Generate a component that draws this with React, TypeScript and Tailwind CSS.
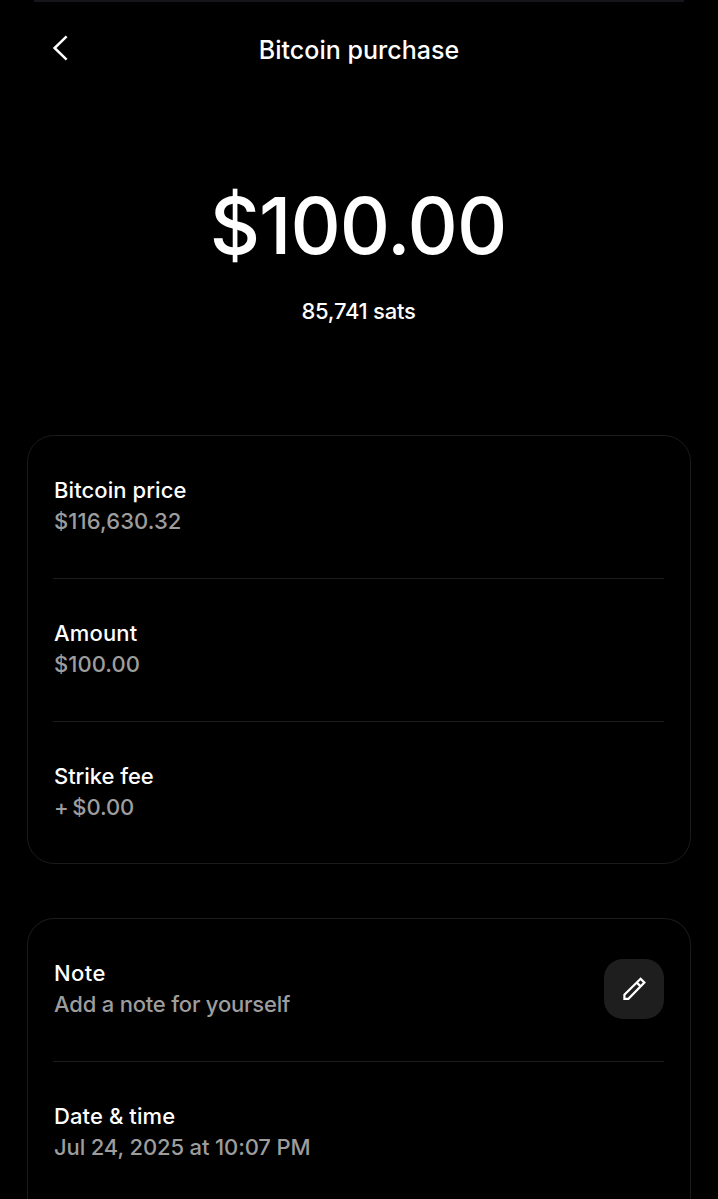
import { ReactNode } from "react";
import clsx from "clsx";

type RowProps = {
  label: string;
  value: string;
  labelClass?: string;
  valueClass?: string;
  last?: boolean;
  children?: ReactNode;
};

function Row({ label, value, labelClass, valueClass, last, children }: RowProps) {
  return (
    <div
      className={clsx(
        "flex items-start justify-between h-[143px] pt-[39px]",
        !last && "border-b border-[#1b1b1b]"
      )}
    >
      <div className="pl-px text-[22px] leading-[31px] font-medium whitespace-nowrap">
        <div className={clsx("text-white", labelClass)}>{label}</div>
        <div className={clsx("text-[#9d9d9d]", valueClass)}>{value}</div>
      </div>
      {children}
    </div>
  );
}

function EditButton() {
  return (
    <button
      aria-label="Edit note"
      className="flex items-center justify-center size-[60px] mt-px rounded-[19px] bg-[#1e1e1e]"
    >
      <svg width="24" height="24" viewBox="0 0 24 24" fill="none" stroke="white" strokeWidth="2.2">
        <path d="M2.4 21.8V17.8L18.6 1.8L22.4 5.6L6.4 21.8Z" />
        <path d="M14.8 5.6L18.6 9.4" />
      </svg>
    </button>
  );
}

export default function App() {
  return (
    <div className="w-[718px] h-[1199px] overflow-hidden bg-black text-white font-['Inter',sans-serif]">
      <div className="h-[2px] mx-[34px] bg-[#15151a]" />

      <header className="flex items-center h-[95px] px-[52px]">
        <button aria-label="Back" className="flex w-[30px] -mt-[3px]">
          <svg width="16" height="26" viewBox="0 0 16 26" fill="none" stroke="white" strokeWidth="2.5">
            <path d="M14.6 1.4L2.6 13L14.6 24.6" />
          </svg>
        </button>
        <h1 className="flex-1 text-center text-[25px] leading-[32px] font-medium tracking-[0.03px]">
          Bitcoin purchase
        </h1>
        <div className="w-[30px]" />
      </header>

      <section className="flex flex-col items-center pt-[84px] h-[338px]">
        <div className="text-[78px] leading-[90px] font-medium tracking-[-1px] mr-[2px]">$100.00</div>
        <div className="mt-[25px] mr-px text-[22px] leading-[31px] font-medium tracking-[-0.25px]">
          85,741 sats
        </div>
      </section>

      <main className="flex flex-col gap-[54px] px-[27px]">
        <section className="rounded-[27px] border border-[#1b1b1b] h-[429px] pl-[25px] pr-[26px]">
          <Row
            label="Bitcoin price"
            value="$116,630.32"
            labelClass="tracking-[0.08px]"
            valueClass="tracking-[0.1px]"
          />
          <Row
            label="Amount"
            value="$100.00"
            labelClass="tracking-[0.15px]"
            valueClass="tracking-[0.05px]"
          />
          <Row
            label="Strike fee"
            value="+ $0.00"
            labelClass="tracking-[-0.05px]"
            valueClass="tracking-[-0.1px] [word-spacing:-2px]"
            last
          />
        </section>

        <section className="rounded-t-[27px] border border-b-0 border-[#1b1b1b] h-[300px] pl-[25px] pr-[26px]">
          <Row
            label="Note"
            value="Add a note for yourself"
            labelClass="tracking-[0.4px]"
            valueClass="tracking-[-0.2px]"
          >
            <EditButton />
          </Row>
          <Row
            label="Date & time"
            value="Jul 24, 2025 at 10:07 PM"
            labelClass="tracking-[0.1px]"
            valueClass="tracking-[-0.13px]"
            last
          />
        </section>
      </main>
    </div>
  );
}
